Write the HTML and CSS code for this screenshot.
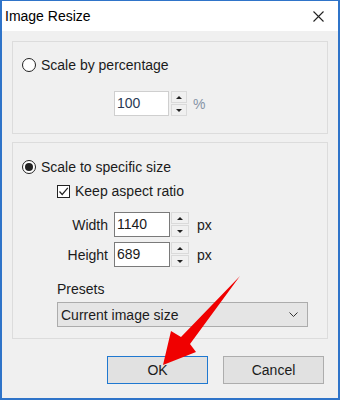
FILE: index.html
```html
<!DOCTYPE html>
<html lang="en">
<head>
    <meta charset="UTF-8">
    <meta name="viewport" content="width=device-width, initial-scale=1.0">
    <title>Image Resize</title>
    <link rel="stylesheet" href="styles.css">
</head>
<body>
    <div class="window">
        <div class="titlebar">
            <span class="title">Image Resize</span>
            <svg class="close" width="11" height="11" viewBox="0 0 11 11">
                <path d="M0.5 0.5 L10.5 10.5 M10.5 0.5 L0.5 10.5" stroke="#222" stroke-width="1.1" fill="none"/>
            </svg>
        </div>

        <div class="content">
            <div class="group group-percent">
                <div class="option"><span class="radio"></span>Scale by percentage</div>
                <div class="spin-row">
                    <span class="field field-disabled">100</span>
                    <span class="spin">
                        <span class="spin-btn"><span class="tri-up"></span></span>
                        <span class="spin-btn"><span class="tri-down"></span></span>
                    </span>
                    <span class="unit unit-disabled">%</span>
                </div>
            </div>

            <div class="group group-size">
                <div class="option"><span class="radio checked"></span>Scale to specific size</div>
                <div class="check-row">
                    <span class="checkbox">
                        <svg width="11" height="11" viewBox="0 0 11 11">
                            <path d="M1.5 5.5 L4.2 8.5 L9.8 1.8" stroke="#222" stroke-width="1.2" fill="none"/>
                        </svg>
                    </span>
                    Keep aspect ratio
                </div>
                <div class="size-grid">
                    <span class="label">Width</span>
                    <span class="field">1140</span>
                    <span class="spin">
                        <span class="spin-btn"><span class="tri-up"></span></span>
                        <span class="spin-btn"><span class="tri-down"></span></span>
                    </span>
                    <span class="unit">px</span>

                    <span class="label">Height</span>
                    <span class="field">689</span>
                    <span class="spin">
                        <span class="spin-btn"><span class="tri-up"></span></span>
                        <span class="spin-btn"><span class="tri-down"></span></span>
                    </span>
                    <span class="unit">px</span>
                </div>
                <div class="presets-label">Presets</div>
                <div class="select">
                    <span>Current image size</span>
                    <svg width="9" height="5" viewBox="0 0 9 5">
                        <path d="M0.5 0.5 L4.5 4.5 L8.5 0.5" stroke="#333" stroke-width="1" fill="none"/>
                    </svg>
                </div>
            </div>

            <div class="buttons">
                <button class="btn btn-default">OK</button>
                <button class="btn">Cancel</button>
            </div>
        </div>

        <!-- red pointer arrow drawn over the dialog -->
        <svg class="arrow" width="340" height="400" viewBox="0 0 340 400">
            <polygon points="240,276 190,344 196,352 163,365 171,331 181,337" fill="#f00000"/>
        </svg>
    </div>
</body>
</html>
```

FILE: styles.css
```css
* {
    box-sizing: border-box;
}
body {
    margin: 0;
    font-family: "Liberation Sans", Arial, sans-serif;
    font-size: 14px;
    color: #1b1b1b;
}
.window {
    position: relative;
    width: 340px;
    height: 400px;
    border: 2px solid #2f74c9;
    border-top-width: 1px;
    background: #f0f0f0;
    display: flex;
    flex-direction: column;
}
.titlebar {
    height: 30px;
    background: #fff;
    display: flex;
    align-items: center;
    justify-content: space-between;
    padding: 0 14px 0 3px;
}
.title {
    font-size: 14px;
    line-height: 16px;
    color: #000;
}
.close {
    display: block;
    margin-top: 1px;
}
.content {
    padding: 10px 10px 0 10px;
    display: flex;
    flex-direction: column;
}
.group {
    border: 1px solid #dcdcdc;
    padding-left: 9px;
}
.group-percent {
    height: 93px;
    padding-top: 15px;
}
.group-size {
    margin-top: 8px;
    height: 197px;
    padding-top: 16px;
}
.option {
    display: flex;
    align-items: center;
    height: 16px;
    gap: 5px;
}
.radio {
    width: 14px;
    height: 14px;
    border: 1px solid #222;
    border-radius: 50%;
    background: #fff;
    display: flex;
    align-items: center;
    justify-content: center;
}
.radio.checked::after {
    content: "";
    width: 8px;
    height: 8px;
    border-radius: 50%;
    background: #222;
}
.spin-row {
    display: flex;
    align-items: center;
    margin: 18px 0 0 92px;
    height: 25px;
}
.field {
    width: 56px;
    height: 25px;
    border: 1px solid #7a7a7a;
    background: #fff;
    line-height: 23px;
    padding-left: 2px;
    color: #1a1a1a;
}
.field-disabled {
    width: 55px;
    border-color: #cfcfcf;
    color: #2a3a55;
}
.spin {
    width: 18px;
    height: 25px;
    margin-left: 1px;
    display: flex;
    flex-direction: column;
    gap: 1px;
}
.spin-row .spin {
    width: 16px;
    margin-left: 2px;
}
.spin-btn {
    flex: 1;
    border: 1px solid #dadada;
    background: #f0f0f0;
    display: flex;
    align-items: center;
    justify-content: center;
}
.tri-up {
    border-left: 3px solid transparent;
    border-right: 3px solid transparent;
    border-bottom: 3px solid #222;
}
.tri-down {
    border-left: 3px solid transparent;
    border-right: 3px solid transparent;
    border-top: 3px solid #222;
}
.unit {
    margin-left: 8px;
}
.unit-disabled {
    color: #8594a6;
    margin-left: 6px;
}
.check-row {
    display: flex;
    align-items: center;
    height: 16px;
    margin: 8px 0 0 35px;
    gap: 5px;
}
.checkbox {
    width: 13px;
    height: 13px;
    border: 1px solid #222;
    background: #fff;
    display: flex;
    align-items: center;
    justify-content: center;
}
.size-grid {
    display: grid;
    grid-template-columns: 57px 56px 19px auto;
    grid-auto-rows: 25px;
    row-gap: 5px;
    align-items: center;
    margin: 13px 0 0 35px;
}
.size-grid .label {
    text-align: right;
    padding-right: 6px;
}
.presets-label {
    margin: 13px 0 0 35px;
    line-height: 18px;
}
.select {
    margin: 4px 0 0 35px;
    width: 251px;
    height: 25px;
    border: 1px solid #acacac;
    background: #e5e5e5;
    display: flex;
    align-items: center;
    justify-content: space-between;
    padding: 0 9px 0 3px;
}
.buttons {
    display: flex;
    justify-content: flex-end;
    gap: 15px;
    margin-top: 17px;
    padding-right: 4px;
}
.btn {
    width: 101px;
    height: 28px;
    border: 1px solid #adadad;
    background: #e1e1e1;
    font-family: "Liberation Sans", Arial, sans-serif;
    font-size: 14px;
    color: #1b1b1b;
    padding: 0;
}
.btn-default {
    border-color: #1f78d0;
}
.arrow {
    position: absolute;
    left: -2px;
    top: -1px;
    pointer-events: none;
}
```
